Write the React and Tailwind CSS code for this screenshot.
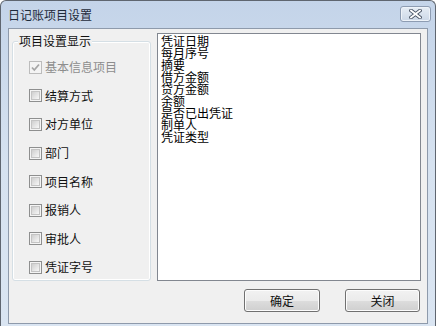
import React from 'react';

const font = { fontFamily: '"Noto Sans CJK SC", "Noto Sans", sans-serif' };

const options = [
  { label: '基本信息项目', checked: true, disabled: true },
  { label: '结算方式' },
  { label: '对方单位' },
  { label: '部门' },
  { label: '项目名称' },
  { label: '报销人' },
  { label: '审批人' },
  { label: '凭证字号' },
];

const fields = ['凭证日期', '每月序号', '摘要', '借方金额', '贷方金额', '余额', '是否已出凭证', '制单人', '凭证类型'];

function CheckBox({ checked, disabled }) {
  if (disabled) {
    return (
      <span className="relative flex h-[13px] w-[13px] shrink-0 items-center justify-center border border-[#bcbcbc] bg-[#f4f4f4]">
        <svg width="11" height="11" viewBox="0 0 11 11">
          {checked && <path d="M2 5.5 L4.3 8 L9 2.5" stroke="#a6a6a6" strokeWidth="1.8" fill="none" />}
        </svg>
      </span>
    );
  }
  return (
    <span className="flex h-[13px] w-[13px] shrink-0 border border-[#8e8f8f] bg-[#f4f4f4] p-[1px]">
      <span className="h-full w-full border border-[#c4c4c4] bg-gradient-to-br from-[#cfcfcf] to-[#f7f7f7]" />
    </span>
  );
}

function Button({ children, width }) {
  return (
    <button
      className={`${width} flex h-[23px] items-center justify-center rounded-[3px] border border-[#707070] bg-[linear-gradient(#f2f2f2_0%,#ebebeb_50%,#dddddd_51%,#cfcfcf_100%)] text-[12px] leading-none text-[#111] shadow-[inset_0_0_0_1px_#fcfcfc]`}
    >
      {children}
    </button>
  );
}

export default function App() {
  return (
    <div style={font} className="h-[326px] w-[436px] overflow-hidden bg-white">
      <div className="flex h-[326px] w-[436px] flex-col rounded-t-[6px] border border-b-0 border-[#5f6670] bg-gradient-to-b from-[#c4d4e9] via-[#d6e2f0] to-[#dae5f2] px-[7px] pb-[2px]">
        {/* title bar */}
        <div className="flex h-[27px] shrink-0 items-center justify-between">
          <span className="text-[12px] leading-none text-[#1e2a3a]">日记账项目设置</span>
          <button className="-mr-[3px] mb-[2px] flex h-[16px] w-[31px] items-center justify-center rounded-[3px] border border-[#8d9cb2] bg-gradient-to-b from-[#e6edf5] to-[#ccd8e7] shadow-[inset_0_0_0_1px_#eef3f9]">
            <svg width="13" height="10" viewBox="0 0 13 10">
              <path d="M2 1.5 L11 8.5 M11 1.5 L2 8.5" stroke="#4a5566" strokeWidth="3.6" strokeLinecap="square" />
              <path d="M2 1.5 L11 8.5 M11 1.5 L2 8.5" stroke="#ffffff" strokeWidth="1.8" strokeLinecap="square" />
            </svg>
          </button>
        </div>

        {/* client area */}
        <div className="flex flex-1 flex-col border border-[#8e9aab] bg-[#f0f0f0]">
          <div className="flex pt-[4px] pl-[3px]">
            {/* group box */}
            <div className="relative mt-[8px] h-[240px] w-[139px] rounded-[3px] border border-[#d5dfe5] shadow-[inset_0_0_0_1px_#ffffff]">
              <span className="absolute -top-[8px] left-[5px] bg-[#f0f0f0] px-[1px] text-[12px] leading-[14px] text-[#111]">
                项目设置显示
              </span>
              <div className="flex flex-col pt-[11px] pl-[16px]">
                {options.map((o) => (
                  <div key={o.label} className="flex h-[28.6px] items-center gap-[3px]">
                    <CheckBox checked={o.checked} disabled={o.disabled} />
                    <span className={`text-[12px] leading-none ${o.disabled ? 'text-[#8d8d8d]' : 'text-[#111]'}`}>
                      {o.label}
                    </span>
                  </div>
                ))}
              </div>
            </div>

            {/* list box */}
            <div className="ml-[6px] h-[248px] w-[264px] border border-[#828790] bg-white pt-[1px] pl-[3px]">
              {fields.map((f) => (
                <div key={f} className="text-[12px] leading-[12px] text-black">
                  {f}
                </div>
              ))}
            </div>
          </div>

          <div className="mt-[8px] flex justify-end gap-[25px] pr-[7px]">
            <Button width="w-[76px]">确定</Button>
            <Button width="w-[75px]">关闭</Button>
          </div>
        </div>
      </div>
    </div>
  );
}
